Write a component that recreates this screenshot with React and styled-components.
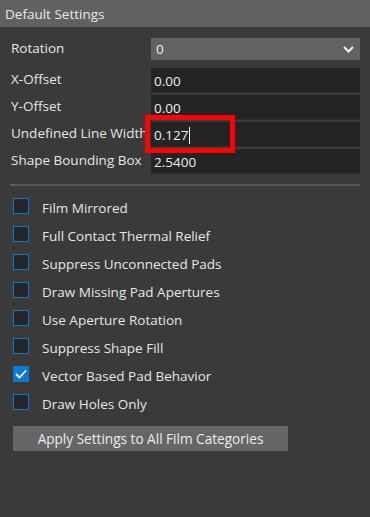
import React, { useState } from 'react';
import styled, { createGlobalStyle } from 'styled-components';

const GlobalStyle = createGlobalStyle`
  html, body {
    margin: 0;
    padding: 0;
    background-color: #3a3a3a;
  }
  * {
    box-sizing: border-box;
  }
`;

const Panel = styled.div`
  width: 370px;
  height: 517px;
  background-color: #3a3a3a;
  font-family: "Open Sans", "Noto Sans", sans-serif;
  font-size: 13.5px;
  color: #e6e6e6;
  overflow: hidden;
`;

const Header = styled.div`
  height: 27px;
  display: flex;
  align-items: center;
  padding-left: 5px;
  background-color: #616161;
  font-size: 13.5px;
  color: #e8e8e8;
`;

const Fields = styled.div`
  display: grid;
  grid-template-columns: 140px 209px;
  grid-auto-rows: auto;
  row-gap: 2px;
  padding: 11px 0 0 11px;
  line-height: 16px;
`;

const Label = styled.label`
  padding-top: ${(p) => p.$top || 3}px;
  line-height: 16px;
  white-space: nowrap;
  overflow: visible;
  color: #e6e6e6;
`;

const SelectBox = styled.div`
  height: 22px;
  margin-bottom: 6px;
  display: flex;
  align-items: center;
  justify-content: space-between;
  padding: 0 6px 0 5px;
  background-color: #626262;
  color: #ededed;
`;

const FieldWrap = styled.div`
  position: relative;
`;

const Input = styled.div`
  height: 25px;
  display: flex;
  align-items: center;
  padding: 2px 0 0 3px;
  background-color: #232423;
  border-bottom: 1px solid #2c2c2c;
  color: #ededed;
`;

const Caret = styled.span`
  display: inline-block;
  width: 1px;
  height: 17px;
  margin-left: 1px;
  background-color: #f0f0f0;
`;

const Highlight = styled.div`
  position: absolute;
  left: -6px;
  top: -7px;
  width: 90px;
  height: 38px;
  border: 5px solid #ff0000;
  pointer-events: none;
`;

const Divider = styled.div`
  height: 2px;
  margin: 10px 10px 0 10px;
  width: 350px;
  background-color: #5a5a5a;
`;

const Checks = styled.div`
  display: flex;
  flex-direction: column;
  padding: 12px 0 0 13px;
`;

const CheckRow = styled.div`
  height: 28px;
  display: flex;
  align-items: flex-start;
  gap: 13px;
  line-height: 16px;
`;

const Box = styled.span`
  width: 16px;
  height: 16px;
  flex-shrink: 0;
  display: flex;
  align-items: center;
  justify-content: center;
  border: 1px solid #0a78d4;
  background-color: ${(p) => (p.$checked ? '#0a78d4' : '#252625')};
`;

const CheckLabel = styled.span`
  line-height: 16px;
  margin-top: 2px;
`;

const Button = styled.div`
  width: 275px;
  height: 25px;
  margin: 4px 0 0 13px;
  display: flex;
  align-items: center;
  justify-content: center;
  background-color: #666666;
  color: #ececec;
  font-size: 13.6px;
`;

const Chevron = () => (
  <svg width="11" height="7" viewBox="0 0 11 7">
    <path d="M1 1 L5.5 5.5 L10 1" fill="none" stroke="#f2f2f2" strokeWidth="2" />
  </svg>
);

const Tick = () => (
  <svg width="12" height="10" viewBox="0 0 12 10">
    <path d="M1 5 L4.5 8.5 L11 1.5" fill="none" stroke="#ffffff" strokeWidth="1.8" />
  </svg>
);

const options = [
  { label: 'Film Mirrored', checked: false },
  { label: 'Full Contact Thermal Relief', checked: false },
  { label: 'Suppress Unconnected Pads', checked: false },
  { label: 'Draw Missing Pad Apertures', checked: false },
  { label: 'Use Aperture Rotation', checked: false },
  { label: 'Suppress Shape Fill', checked: false },
  { label: 'Vector Based Pad Behavior', checked: true },
  { label: 'Draw Holes Only', checked: false },
];

const App = () => {
  const [checks] = useState(options);

  return (
    <Panel>
      <GlobalStyle />
      <Header>Default Settings</Header>
      <Fields>
        <Label $top={2}>Rotation</Label>
        <SelectBox>
          <span>0</span>
          <Chevron />
        </SelectBox>

        <Label>X-Offset</Label>
        <Input>0.00</Input>

        <Label>Y-Offset</Label>
        <Input>0.00</Input>

        <Label>Undefined Line Width</Label>
        <FieldWrap>
          <Input>
            0.127
            <Caret />
          </Input>
          <Highlight />
        </FieldWrap>

        <Label>Shape Bounding Box</Label>
        <Input>2.5400</Input>
      </Fields>
      <Divider />
      <Checks>
        {checks.map((c) => (
          <CheckRow key={c.label}>
            <Box $checked={c.checked}>{c.checked && <Tick />}</Box>
            <CheckLabel>{c.label}</CheckLabel>
          </CheckRow>
        ))}
      </Checks>
      <Button>Apply Settings to All Film Categories</Button>
    </Panel>
  );
};

export default App;
